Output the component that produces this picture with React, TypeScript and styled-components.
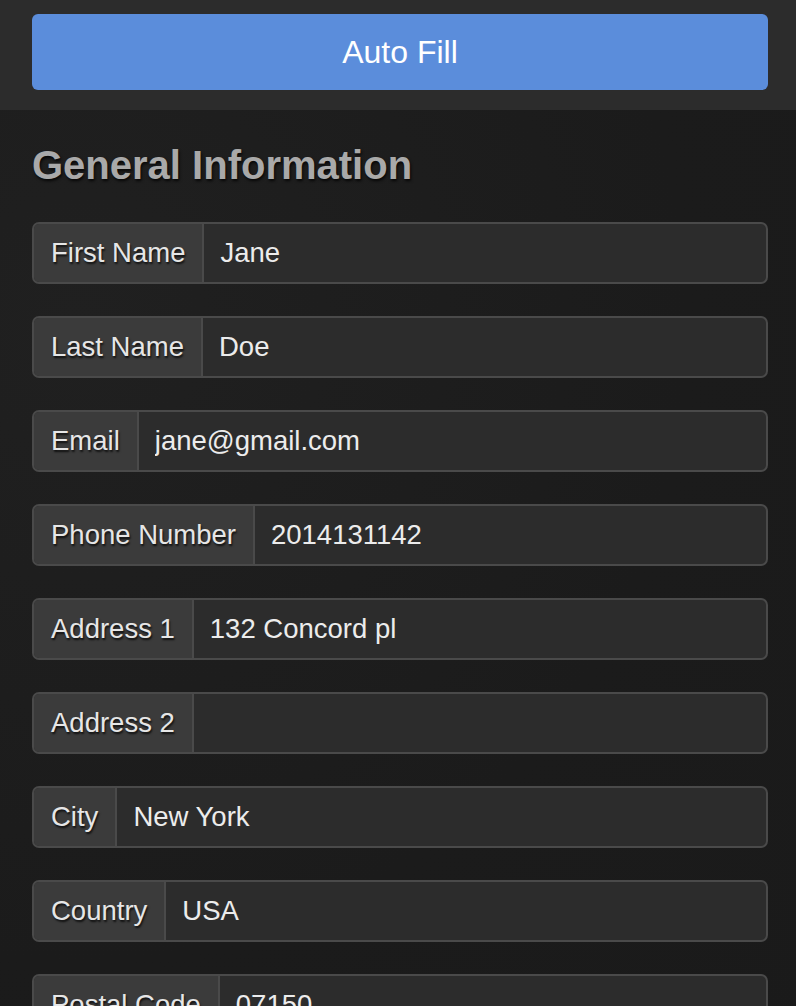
import styled, { createGlobalStyle } from "styled-components";

const GlobalStyle = createGlobalStyle`
  html, body {
    margin: 0;
    padding: 0;
    background: #1b1b1b;
    font-family: "Liberation Sans", Arial, Helvetica, sans-serif;
  }
`;

const Page = styled.div`
  min-height: 100vh;
  background: radial-gradient(ellipse at 10% 30%, #202020 0%, #1b1b1b 60%, #1a1a1a 100%);
`;

const Header = styled.header`
  background: #2c2c2c;
  padding: 14px 28px 20px 32px;
`;

const FillButton = styled.button`
  display: block;
  width: 100%;
  height: 76px;
  border: none;
  border-radius: 6px;
  background: #5b8ddb;
  color: #ffffff;
  font-family: inherit;
  font-size: 32px;
  cursor: pointer;
`;

const Form = styled.form`
  display: flex;
  flex-direction: column;
  gap: 32px;
  padding: 30px 28px 40px 32px;
`;

const Heading = styled.h2`
  margin: 0;
  font-size: 40px;
  line-height: 50px;
  font-weight: 700;
  color: #a9a9a9;
  text-shadow: 1px 2px 3px rgba(0, 0, 0, 0.8);
`;

const Group = styled.div`
  display: flex;
  height: 62px;
  box-sizing: border-box;
  border: 2px solid #4a4a4a;
  border-radius: 7px;
  overflow: hidden;
  background: #2c2c2c;
`;

const Label = styled.label`
  display: flex;
  align-items: center;
  padding: 0 17px;
  background: #3b3b3b;
  border-right: 2px solid #4a4a4a;
  color: #e6e6e6;
  font-size: 27.5px;
  white-space: nowrap;
  text-shadow: 1px 2px 2px rgba(0, 0, 0, 0.75);
`;

const Input = styled.input`
  flex: 1;
  min-width: 0;
  border: none;
  outline: none;
  background: transparent;
  padding: 0 16px;
  color: #ececec;
  font-family: inherit;
  font-size: 27.5px;
`;

const fields = [
  { label: "First Name", value: "Jane" },
  { label: "Last Name", value: "Doe" },
  { label: "Email", value: "jane@gmail.com" },
  { label: "Phone Number", value: "2014131142" },
  { label: "Address 1", value: "132 Concord pl" },
  { label: "Address 2", value: "" },
  { label: "City", value: "New York" },
  { label: "Country", value: "USA" },
  { label: "Postal Code", value: "07150" },
];

export default function App() {
  return (
    <Page>
      <GlobalStyle />
      <Header>
        <FillButton type="button">Auto Fill</FillButton>
      </Header>
      <Form>
        <Heading>General Information</Heading>
        {fields.map((f) => (
          <Group key={f.label}>
            <Label>{f.label}</Label>
            <Input defaultValue={f.value} />
          </Group>
        ))}
      </Form>
    </Page>
  );
}
